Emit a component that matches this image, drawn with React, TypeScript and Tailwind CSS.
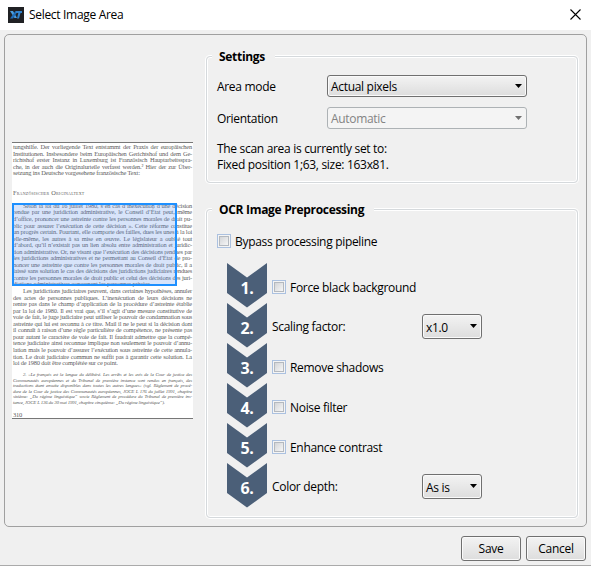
import React from "react";

const bodyLines: [string, string][] = [
  ["tungshilfe. Der vorliegende Text entstammt der Praxis der europäischen", "j"],
  ["Institutionen. Insbesondere beim Europäischen Gerichtshof und dem Ge-", "j"],
  ["richtshof erster Instanz in Luxemburg ist Französisch Hauptarbeitsspra-", "j"],
  ["che, in der auch die Originalurteile verfasst werden.² Hier der zur Über-", "j"],
  ["setzung ins Deutsche vorgesehene französische Text:", "l"],
  ["", "l"],
  ["", "l"],
  ["Französischer Originaltext", "h"],
  ["", "l"],
  ["Selon la loi du 16 juillet 1980, s’en cas d’inexécution d’une décision", "i"],
  ["rendue par une juridiction administrative, le Conseil d’État peut, même", "j"],
  ["d’office, prononcer une astreinte contre les personnes morales de droit pu-", "j"],
  ["blic pour assurer l’exécution de cette décision ». Cette réforme constitue", "j"],
  ["un progrès certain. Pourtant, elle comporte des failles, dues les unes à la loi", "j"],
  ["elle-même, les autres à sa mise en œuvre. Le législateur a oublié tout", "j"],
  ["d’abord, qu’il n’existait pas un lien absolu entre administration et juridic-", "j"],
  ["tion administrative. Or, ne visant que l’exécution des décisions rendues par", "j"],
  ["les juridictions administratives et ne permettant au Conseil d’État de pro-", "j"],
  ["noncer une astreinte que contre les personnes morales de droit public, il a", "j"],
  ["laissé sans solution le cas des décisions des juridictions judiciaires rendues", "j"],
  ["contre les personnes morales de droit public et celui des décisions des juri-", "j"],
  ["dictions administratives concernant les personnes privées.", "l"],
  ["Les juridictions judiciaires peuvent, dans certaines hypothèses, annuler", "i"],
  ["des actes de personnes publiques. L’inexécution de leurs décisions ne", "j"],
  ["rentre pas dans le champ d’application de la procédure d’astreinte établie", "j"],
  ["par la loi de 1980. Il est vrai que, s’il s’agit d’une mesure constitutive de", "j"],
  ["voie de fait, le juge judiciaire peut utiliser le pouvoir de condamnation sous", "j"],
  ["astreinte qui lui est reconnu à ce titre. Mail il ne le peut si la décision dont", "j"],
  ["il connaît à raison d’une règle particulière de compétence, ne présente pas", "j"],
  ["pour autant le caractère de voie de fait. Il faudrait admettre que la compé-", "j"],
  ["tence judiciaire ainsi reconnue implique non seulement le pouvoir d’annu-", "j"],
  ["lation mais le pouvoir d’assurer l’exécution sous astreinte de cette annula-", "j"],
  ["tion. Le droit judiciaire commun ne suffit pas à garantir cette solution. La", "j"],
  ["loi de 1980 doit être complétée sur ce point.", "l"],
];

const noteLines: [string, string][] = [
  ["2.   »Le français est la langue du délibéré. Les arrêts et les avis de la Cour de justice des", "i"],
  ["Communautés européennes et du Tribunal de première instance sont rendus en français, des", "j"],
  ["traductions étant ensuite disponibles dans toutes les autres langues« (vgl. Règlement de procé-", "j"],
  ["dure de la Cour de justice des Communautés européennes, JOCE L 176 du juillet 1991, chapitre", "j"],
  ["sixième: „Du régime linguistique“ sowie Règlement de procédure du Tribunal de première ins-", "j"],
  ["tance, JOCE L 136 du 30 mai 1991, chapitre cinquième: „Du régime linguistique“).", "l"],
];

const lineStyle: Record<string, string> = {
  j: "tracking-[-0.2px] [text-align-last:justify]",
  i: "tracking-[-0.2px] pl-[10px] [text-align-last:justify]",
  l: "tracking-[-0.17px]",
  h: "tracking-[0.2px] [font-variant:small-caps]",
};

function ScannedPage() {
  return (
    <div className="relative mt-[107px] ml-[7px] h-[277px] w-[181px] shrink-0 overflow-hidden border-t border-b border-[#777] bg-white pt-px pr-px pl-px font-['Liberation_Serif',serif] text-[#606060]">
      {bodyLines.map(([t, k], i) => (
        <div key={i} className={"h-[6.56px] text-[6.4px] leading-[6.56px] whitespace-nowrap " + lineStyle[k]}>
          {t}
        </div>
      ))}
      <div className="mt-[5.5px] italic">
        {noteLines.map(([t, k], i) => (
          <div key={i} className={"h-[5.56px] text-[4.9px] leading-[5.56px] whitespace-nowrap " + lineStyle[k]}>
            {t}
          </div>
        ))}
      </div>
      <div className="mt-[6px] text-[6.5px] leading-[8px]">310</div>
      <div className="absolute top-[60px] left-0 h-[83px] w-[165px] border-2 border-[#1e90ff] bg-[#6495ed]/25" />
    </div>
  );
}

function Check({ label }: { label: string }) {
  return (
    <div className="flex h-[14px] items-center">
      <div className="flex size-[14px] items-center justify-center border border-[#abc1e0] bg-[#f4f4f4]">
        <div className="size-[10px] border border-[#b4b9bf] bg-linear-to-br from-[#d3d5d8] to-[#f6f6f6]" />
      </div>
      <span className="mt-[2px] ml-[4px] whitespace-nowrap">{label}</span>
    </div>
  );
}

function Combo({ label, className, disabled = false }: { label: string; className: string; disabled?: boolean }) {
  return (
    <div
      className={
        "flex items-center justify-between rounded-[3px] border pr-[4px] pl-[3px] whitespace-nowrap " +
        (disabled
          ? "border-[#adb2b5] bg-[#f4f4f4] text-[#838383] "
          : "border-[#707070] bg-linear-to-b from-[#f3f3f3] to-[#dddddd] shadow-[inset_0_0_0_1px_#fafafa] ") +
        className
      }
    >
      <span className="mt-[2px]">{label}</span>
      <svg width="7" height="4" viewBox="0 0 7 4" className="mb-px">
        <path d="M0 0H7L3.5 4Z" fill={disabled ? "#707070" : "#000"} />
      </svg>
    </div>
  );
}

function Group({ title, titleClass, className, children }: { title: string; titleClass: string; className: string; children: React.ReactNode }) {
  return (
    <section className={"relative w-[372px] rounded-[4px] border border-[#d5d9dc] shadow-[inset_0_0_0_1px_#fff,0_0_0_1px_#fff] " + className}>
      <h2 className={"absolute -top-[9px] left-[5px] h-[18px] bg-[#f0f0f0] pl-[7px] leading-[18px] font-bold whitespace-nowrap " + titleClass}>{title}</h2>
      {children}
    </section>
  );
}

function Step({ n, children }: { n: number; children: React.ReactNode }) {
  return (
    <div className="flex h-[40px]">
      <div className="relative h-[45px] w-[40px] shrink-0">
        <svg width="40" height="45" viewBox="0 0 40 45" className="absolute inset-0">
          <path d="M0 0L20 14.5L40 0V30L20 44.5L0 30Z" fill="#4b5f78" />
        </svg>
        <span className="relative block pt-[14px] text-center text-[16px] leading-[22px] font-bold text-white">{n}.</span>
      </div>
      <div className="ml-[5px] flex h-[47px] items-center">{children}</div>
    </div>
  );
}

function Button({ children }: { children: React.ReactNode }) {
  return (
    <button className="h-[25px] w-[60px] rounded-[3px] border border-[#707070] bg-linear-to-b from-[#f3f3f3] to-[#dddddd] tracking-[-0.3px] shadow-[inset_0_0_0_1px_#fafafa]">
      {children}
    </button>
  );
}

export default function App() {
  return (
    <div className="flex h-[566px] w-[591px] flex-col overflow-hidden border-b border-[#aaa] bg-[#f0f0f0] font-['Open_Sans','Noto_Sans',sans-serif] text-[12px] leading-[16px] tracking-[-0.31px] text-black">
      <header className="flex h-[30px] shrink-0 items-center bg-white pr-[10px] pl-[8px]">
        <svg width="16" height="16" viewBox="0 0 16 16">
          <rect width="16" height="16" fill="#202124" />
          <path d="M2 4H5L9 11H6.5Z" fill="#4a9ee0" />
          <path d="M7.5 4H10L5 11.5H2Z" fill="#1f6db8" />
          <path d="M8 4H14V6H12.5L11 11.5H9L10.3 6H8Z" fill="#3183cd" />
        </svg>
        <span className="ml-[5px]">Select Image Area</span>
        <svg width="11" height="11" viewBox="0 0 11 11" className="mb-[2px] ml-auto">
          <path d="M.5 .5L10.5 10.5M10.5 .5L.5 10.5" stroke="#000" strokeWidth="1.1" />
        </svg>
      </header>
      <main className="mt-[4px] ml-[4px] flex h-[493px] w-[583px] shrink-0 rounded-[5px] border border-[#a0a0a0]">
        <ScannedPage />
        <div className="ml-[13px]">
          <Group title="Settings" titleClass="w-[63px]" className="mt-[21px] h-[127px] pt-[18px] pl-[10px]">
            <div className="flex h-[22px] items-center">
              <span className="mt-[2px] w-[110px]">Area mode</span>
              <Combo label="Actual pixels" className="h-[22px] w-[200px]" />
            </div>
            <div className="mt-[10px] flex h-[22px] items-center">
              <span className="mt-[2px] w-[110px]">Orientation</span>
              <Combo label="Automatic" className="h-[22px] w-[200px]" disabled />
            </div>
            <p className="mt-[12px] whitespace-nowrap">
              The scan area is currently set to:
              <br />
              Fixed position 1;63, size: 163x81.
            </p>
          </Group>
          <Group title="OCR Image Preprocessing" titleClass="w-[162px]" className="mt-[26px] h-[309px] pt-[24px] pl-[10px]">
            <Check label="Bypass processing pipeline" />
            <div className="mt-[15px] ml-[10px]">
              <Step n={1}><div className="mt-px"><Check label="Force black background" /></div></Step>
              <Step n={2}>
                <span className="mt-px w-[150px]">Scaling factor:</span>
                <Combo label="x1.0" className="h-[25px] w-[60px]" />
              </Step>
              <Step n={3}><div className="mt-px"><Check label="Remove shadows" /></div></Step>
              <Step n={4}><div className="mt-px"><Check label="Noise filter" /></div></Step>
              <Step n={5}><div className="mt-px"><Check label="Enhance contrast" /></div></Step>
              <Step n={6}>
                <span className="mt-px w-[150px]">Color depth:</span>
                <Combo label="As is" className="h-[25px] w-[60px]" />
              </Step>
            </div>
          </Group>
        </div>
      </main>
      <footer className="mt-[9px] flex justify-end gap-[5px] pr-[5px]">
        <Button>Save</Button>
        <Button>Cancel</Button>
      </footer>
    </div>
  );
}
